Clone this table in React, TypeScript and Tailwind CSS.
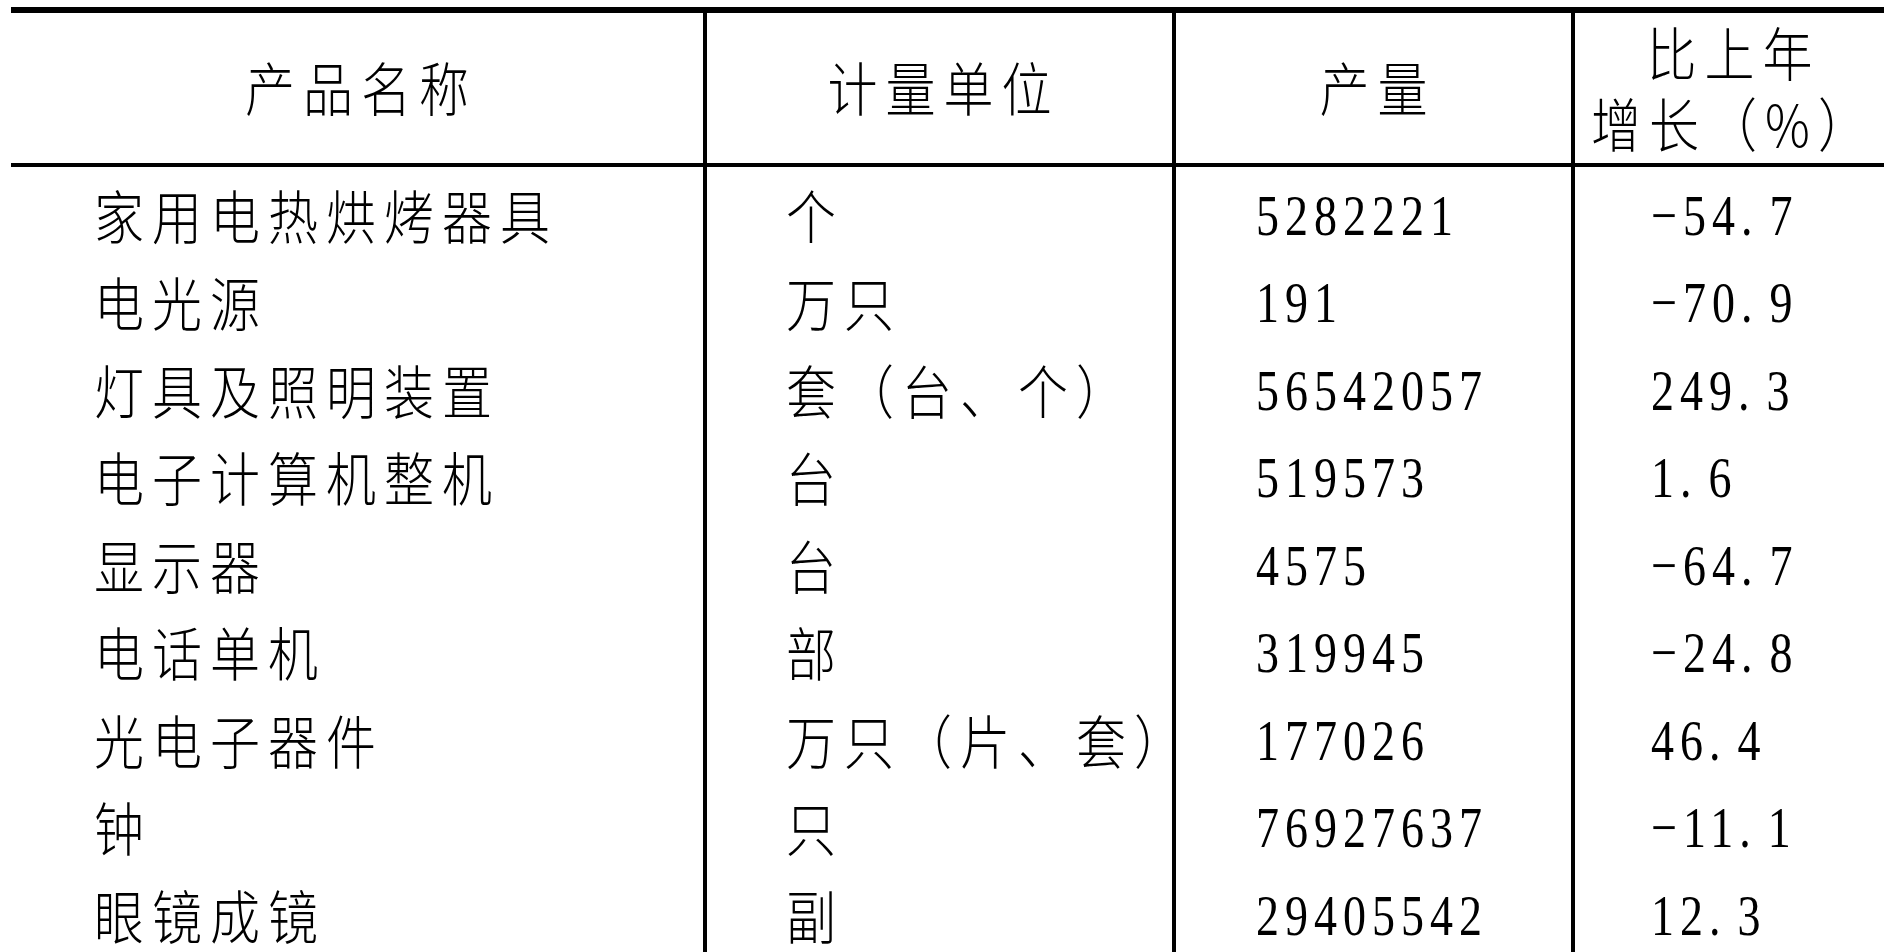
import React from "react";

const rows: [string, string, string, string][] = [
  ["家用电热烘烤器具", "个", "5282221", "−54.7"],
  ["电光源", "万只", "191", "−70.9"],
  ["灯具及照明装置", "套（台、个）", "56542057", "249.3"],
  ["电子计算机整机", "台", "519573", "1.6"],
  ["显示器", "台", "4575", "−64.7"],
  ["电话单机", "部", "319945", "−24.8"],
  ["光电子器件", "万只（片、套）", "177026", "46.4"],
  ["钟", "只", "76927637", "−11.1"],
  ["眼镜成镜", "副", "29405542", "12.3"],
];

const cjkBase =
  "inline-block scale-y-[1.16] font-['Noto_Sans_CJK_SC',sans-serif] font-light text-[50px] tracking-[8px] text-black whitespace-nowrap";
const cjk = `${cjkBase} leading-none`;
const num =
  "inline-block scale-y-[1.26] translate-y-[3px] font-['Liberation_Serif',serif] text-[46px] leading-none tracking-[6px] text-black whitespace-nowrap";

function Dec({ v }: { v: string }) {
  const i = v.indexOf(".");
  if (i < 0) return <>{v}</>;
  return (
    <>
      {v.slice(0, i)}
      <span className="mr-[11px]">.</span>
      {v.slice(i + 1)}
    </>
  );
}

function Row({ children, pl }: { children: React.ReactNode; pl: string }) {
  return <div className={`h-[87.5px] shrink-0 flex items-center ${pl}`}>{children}</div>;
}

export default function App() {
  return (
    <div className="w-[1887px] h-[952px] overflow-hidden bg-white pt-[7px] pl-[11px]">
      <div className="w-[1873px] border-t-[6px] border-black flex">
        {/* Column 1 */}
        <div className="w-[692px] h-[939px] flex flex-col">
          <div className="h-[154px] shrink-0 border-b-4 border-black flex items-center justify-center pb-[7px]">
            <span className={`${cjk} -mr-[8px]`}>产品名称</span>
          </div>
          <div className="pt-[2px] flex flex-col">
            {rows.map((r, k) => (
              <Row key={k} pl="pl-[83px]">
                <span className={cjk}>{r[0]}</span>
              </Row>
            ))}
          </div>
        </div>
        {/* Column 2 */}
        <div className="w-[469px] h-[939px] border-l-4 border-black flex flex-col">
          <div className="h-[154px] shrink-0 border-b-4 border-black flex items-center justify-center pb-[7px]">
            <span className={`${cjk} -mr-[8px]`}>计量单位</span>
          </div>
          <div className="pt-[2px] flex flex-col">
            {rows.map((r, k) => (
              <Row key={k} pl="pl-[79px]">
                <span className={`${cjk} tracking-[4px]`}>{r[1]}</span>
              </Row>
            ))}
          </div>
        </div>
        {/* Column 3 */}
        <div className="w-[399px] h-[939px] border-l-4 border-black flex flex-col">
          <div className="h-[154px] shrink-0 border-b-4 border-black flex items-center justify-center pb-[7px]">
            <span className={`${cjk} -mr-[8px]`}>产量</span>
          </div>
          <div className="pt-[2px] flex flex-col">
            {rows.map((r, k) => (
              <Row key={k} pl="pl-[80px]">
                <span className={num}>{r[2]}</span>
              </Row>
            ))}
          </div>
        </div>
        {/* Column 4 */}
        <div className="w-[313px] h-[939px] border-l-4 border-black flex flex-col">
          <div className="h-[154px] shrink-0 border-b-4 border-black flex items-center justify-center pb-[4px]">
            <span className={`${cjkBase} leading-[62px] text-center -mr-[8px]`}>
              比上年
              <br />
              增长（%）
            </span>
          </div>
          <div className="pt-[2px] flex flex-col">
            {rows.map((r, k) => (
              <Row key={k} pl="pl-[76px]">
                <span className={num}>
                  <Dec v={r[3]} />
                </span>
              </Row>
            ))}
          </div>
        </div>
      </div>
    </div>
  );
}
